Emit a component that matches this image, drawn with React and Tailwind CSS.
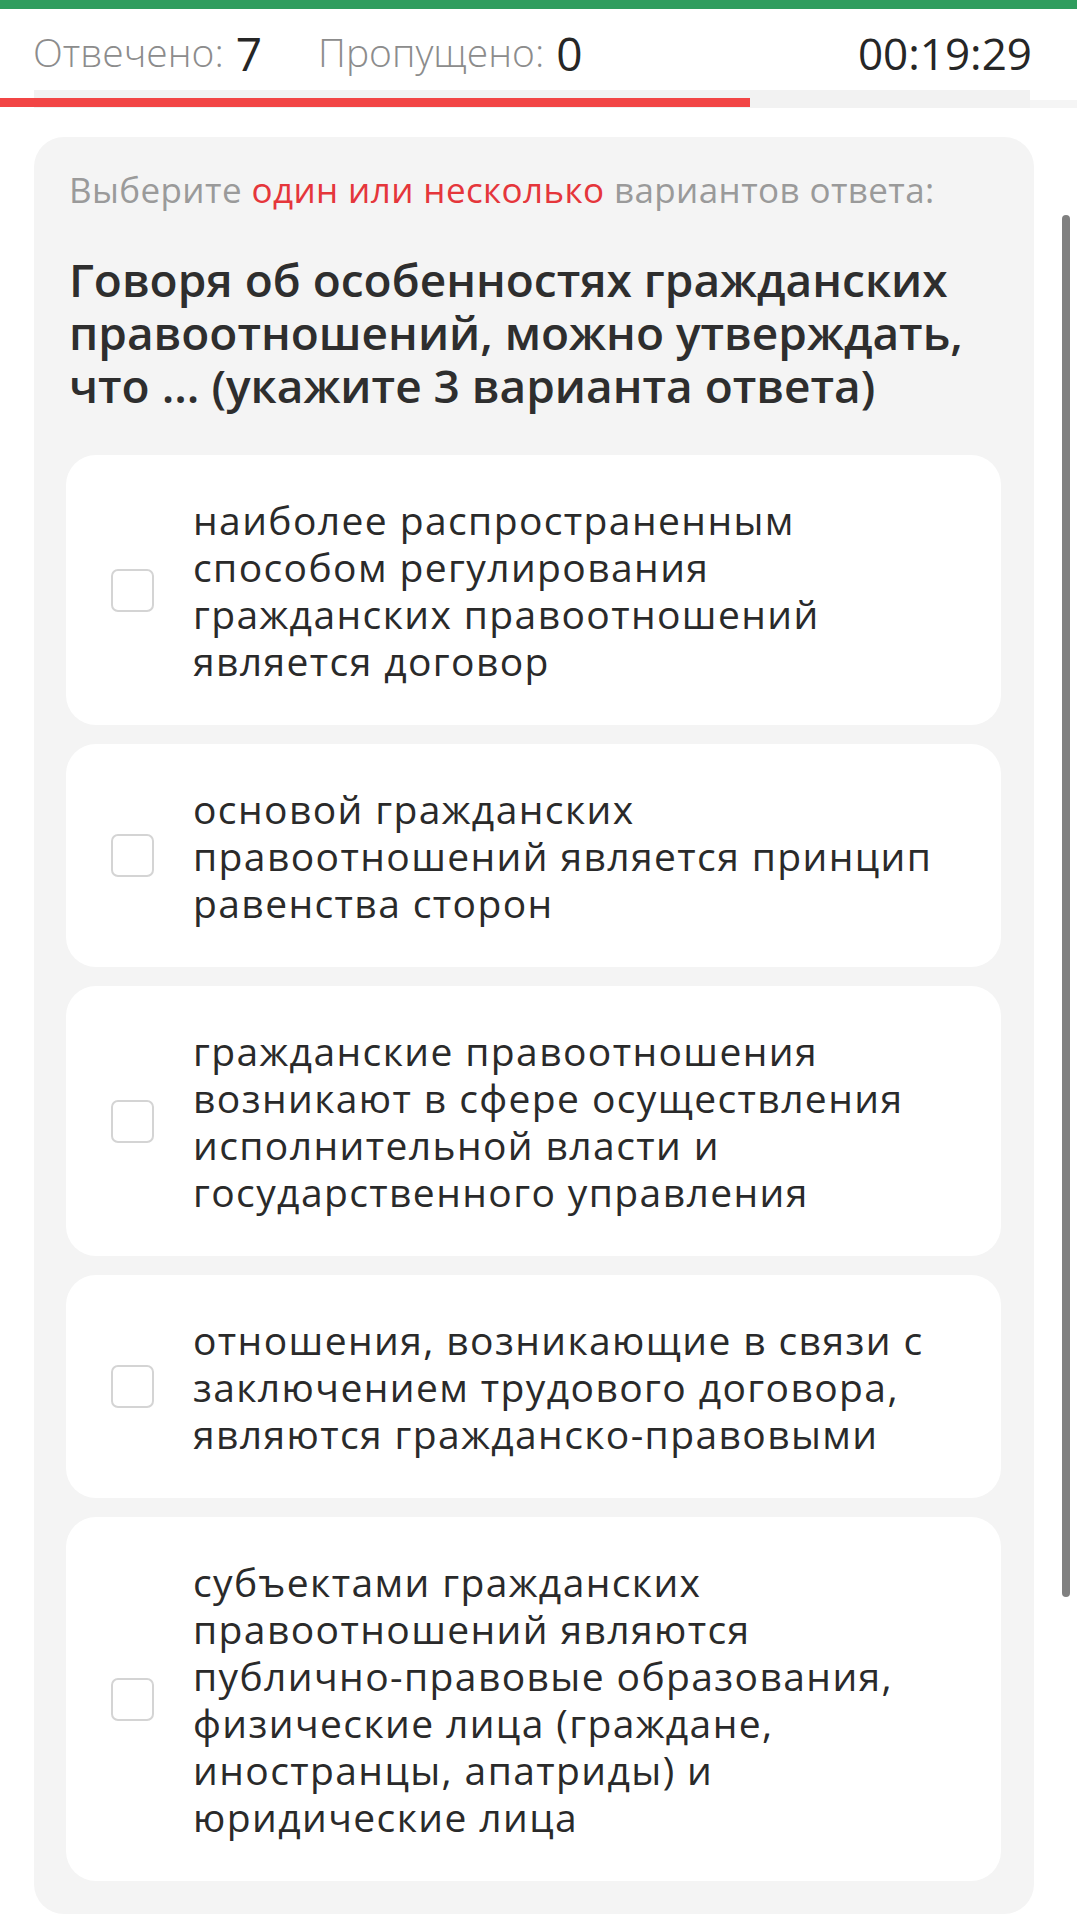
import React from "react";

const options = [
  ["наиболее распространенным", "способом регулирования", "гражданских правоотношений", "является договор"],
  ["основой гражданских", "правоотношений является принцип", "равенства сторон"],
  ["гражданские правоотношения", "возникают в сфере осуществления", "исполнительной власти и", "государственного управления"],
  ["отношения, возникающие в связи с", "заключением трудового договора,", "являются гражданско-правовыми"],
  ["субъектами гражданских", "правоотношений являются", "публично-правовые образования,", "физические лица (граждане,", "иностранцы, апатриды) и", "юридические лица"],
];

function Option({ lines }) {
  return (
    <div className="flex items-center bg-white rounded-[30px] py-[41px] pl-[45px] pr-[45px]">
      <div className="w-[43px] h-[43px] shrink-0 rounded-[7px] border-2 border-[#d4d4d4] bg-white" />
      <div className="ml-[39px] text-[39px] leading-[47px] text-[#2a2a2a] tracking-[1.4px]">
        {lines.map((l, i) => (
          <div key={i} className="whitespace-nowrap">{l}</div>
        ))}
      </div>
    </div>
  );
}

export default function App() {
  return (
    <div className="relative w-[1077px] h-[1920px] bg-white overflow-hidden" style={{ fontFamily: '"Open Sans", "Noto Sans", sans-serif' }}>
      <div className="h-[9px] bg-[#2f9d5e]" />
      <div className="flex items-center justify-between h-[81px] pl-[33px] pr-[45px] pt-[6px]">
        <div className="flex items-center">
          <span className="text-[39px] font-light text-[#8c8c8c]">Отвечено:</span>
          <span className="ml-[12px] text-[46px] font-medium text-[#262626] leading-none">7</span>
          <span className="ml-[56px] text-[39px] font-light text-[#8c8c8c]">Пропущено:</span>
          <span className="ml-[12px] text-[46px] font-medium text-[#262626] leading-none">0</span>
        </div>
        <span className="text-[44px] font-medium text-[#262626] leading-none">00:19:29</span>
      </div>
      <div className="relative h-[18px]">
        <div className="ml-[34px] w-[996px] h-[18px] bg-[#f2f2f2]" />
        <div className="absolute left-[1030px] right-0 top-[10px] h-[8px] bg-[#f5f5f5]" />
        <div className="absolute left-0 top-[8px] h-[9px] w-[750px] bg-[#f24545]" />
      </div>
      <div className="mt-[29px] ml-[34px] mr-[43px] bg-[#f4f4f4] rounded-[30px] pt-[30px] pb-[33px] pl-[32px] pr-[33px]">
        <div className="pl-[3px] text-[35px] leading-[46px] text-[#9a9a9a] tracking-[0.4px] whitespace-nowrap">
          Выберите <span className="text-[#e5363b]">один или несколько</span> вариантов ответа:
        </div>
        <div className="pl-[3px] mt-[40px] text-[46px] leading-[53px] font-semibold text-[#2e2e2e]">
          <div className="whitespace-nowrap">Говоря об особенностях гражданских</div>
          <div className="whitespace-nowrap">правоотношений, можно утверждать,</div>
          <div className="whitespace-nowrap">что ... (укажите 3 варианта ответа)</div>
        </div>
        <div className="mt-[43px] flex flex-col gap-[19px]">
          {options.map((o, i) => (
            <Option key={i} lines={o} />
          ))}
        </div>
      </div>
      <div className="absolute left-[1062px] top-[215px] w-[8px] h-[1382px] rounded-full bg-[#808080]" />
    </div>
  );
}
